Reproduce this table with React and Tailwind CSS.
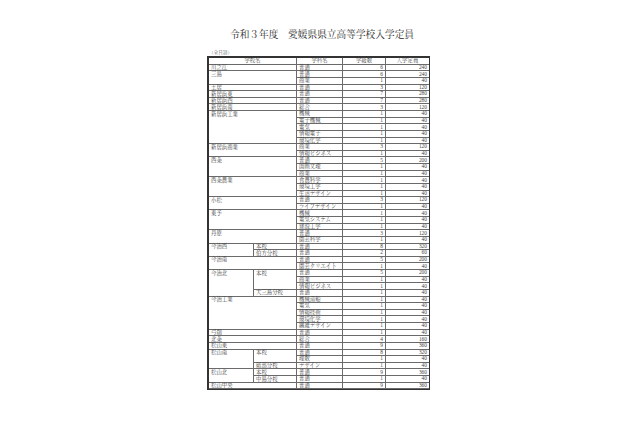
import React from "react";

const D = (dept, n, cap) => [dept, n, cap];
const G = (branch, depts) => ({ branch, depts });

const schools = [
  { name: "川之江", groups: [G(null, [D("普通", 6, 240)])] },
  { name: "三島", groups: [G(null, [D("普通", 6, 240), D("商業", 1, 40)])] },
  { name: "土居", groups: [G(null, [D("普通", 3, 120)])] },
  { name: "新居浜東", groups: [G(null, [D("普通", 7, 280)])] },
  { name: "新居浜西", groups: [G(null, [D("普通", 7, 280)])] },
  { name: "新居浜南", groups: [G(null, [D("総合", 3, 120)])] },
  {
    name: "新居浜工業",
    groups: [
      G(null, [
        D("機械", 1, 40),
        D("電子機械", 1, 40),
        D("電気", 1, 40),
        D("情報電子", 1, 40),
        D("環境化学", 1, 40),
      ]),
    ],
  },
  { name: "新居浜商業", groups: [G(null, [D("商業", 3, 120), D("情報ビジネス", 1, 40)])] },
  { name: "西条", groups: [G(null, [D("普通", 5, 200), D("国際文理", 1, 40), D("商業", 1, 40)])] },
  {
    name: "西条農業",
    groups: [G(null, [D("食農科学", 1, 40), D("環境工学", 1, 40), D("生活デザイン", 1, 40)])],
  },
  { name: "小松", groups: [G(null, [D("普通", 3, 120), D("ライフデザイン", 1, 40)])] },
  {
    name: "東予",
    groups: [G(null, [D("機械", 1, 40), D("電気システム", 1, 40), D("建設工学", 1, 40)])],
  },
  { name: "丹原", groups: [G(null, [D("普通", 3, 120), D("園芸科学", 1, 40)])] },
  {
    name: "今治西",
    groups: [G("本校", [D("普通", 8, 320)]), G("伯方分校", [D("普通", 2, 60)])],
  },
  { name: "今治南", groups: [G(null, [D("普通", 5, 200), D("園芸クリエイト", 1, 40)])] },
  {
    name: "今治北",
    groups: [
      G("本校", [D("普通", 5, 200), D("商業", 1, 40), D("情報ビジネス", 1, 40)]),
      G("大三島分校", [D("普通", 1, 40)]),
    ],
  },
  {
    name: "今治工業",
    groups: [
      G(null, [
        D("機械造船", 1, 40),
        D("電気", 1, 40),
        D("情報技術", 1, 40),
        D("環境化学", 1, 40),
        D("繊維デザイン", 1, 40),
      ]),
    ],
  },
  { name: "弓削", groups: [G(null, [D("普通", 1, 40)])] },
  { name: "北条", groups: [G(null, [D("総合", 4, 160)])] },
  { name: "松山東", groups: [G(null, [D("普通", 9, 360)])] },
  {
    name: "松山南",
    groups: [G("本校", [D("普通", 8, 320), D("理数", 1, 40)]), G("砥部分校", [D("デザイン", 1, 40)])],
  },
  {
    name: "松山北",
    groups: [G("本校", [D("普通", 9, 360)]), G("中島分校", [D("普通", 1, 40)])],
  },
  { name: "松山中央", groups: [G(null, [D("普通", 9, 360)])] },
];

const SPAN = {
  1: "row-span-1",
  2: "row-span-2",
  3: "row-span-3",
  4: "row-span-4",
  5: "row-span-5",
};

const cell = "border-r border-b border-[#6a6a6a] flex items-center leading-[5px] whitespace-nowrap";

function buildCells() {
  const cells = [];
  schools.forEach((s, si) => {
    const total = s.groups.reduce((a, g) => a + g.depts.length, 0);
    const hasBranch = s.groups[0].branch !== null;
    s.groups.forEach((g, gi) => {
      g.depts.forEach((d, di) => {
        if (gi === 0 && di === 0) {
          cells.push(
            <div
              key={`s${si}`}
              className={`${cell} ${SPAN[total]} ${hasBranch ? "col-span-1" : "col-span-2"} items-start pl-[2px] pt-[0.5px]`}
            >
              {s.name}
            </div>
          );
        }
        if (hasBranch && di === 0) {
          cells.push(
            <div
              key={`b${si}-${gi}`}
              className={`${cell} ${SPAN[g.depts.length]} items-start pl-[2px] pt-[0.5px]`}
            >
              {g.branch}
            </div>
          );
        }
        cells.push(
          <div key={`d${si}-${gi}-${di}`} className={`${cell} pl-[2px]`}>
            {d[0]}
          </div>
        );
        cells.push(
          <div key={`n${si}-${gi}-${di}`} className={`${cell} justify-end pr-[2px] font-['Liberation_Serif',serif]`}>
            {d[1]}
          </div>
        );
        cells.push(
          <div key={`c${si}-${gi}-${di}`} className={`${cell} justify-end pr-[2px] font-['Liberation_Serif',serif]`}>
            {d[2]}
          </div>
        );
      });
    });
  });
  return cells;
}

export default function App() {
  return (
    <div className="w-[640px] h-[426px] bg-white overflow-hidden font-['Noto_Serif_CJK_JP','Noto_Sans_CJK_JP',sans-serif] text-[#444]">
      <div className="pt-[29px] pl-[4px] text-center text-[9.7px] leading-[10px] text-[#2a2a2a]">
        令和３年度　愛媛県県立高等学校入学定員
      </div>
      <div className="pl-[209px] pt-[11px] text-[4.6px] leading-[5px] text-[#555]">（全日制）</div>
      <div className="pl-[208px] pt-[2px]">
        <div className="grid w-[221px] grid-cols-[45px_43px_46px_43px_44px] auto-rows-[6.64px] border-t border-l border-[#333] text-[5.4px] outline outline-[0.3px] outline-[#333]">
          <div className={`${cell} col-span-2 justify-center`}>学校名</div>
          <div className={`${cell} justify-center`}>学科名</div>
          <div className={`${cell} justify-center`}>学級数</div>
          <div className={`${cell} justify-center`}>入学定員</div>
          {buildCells()}
        </div>
      </div>
    </div>
  );
}
